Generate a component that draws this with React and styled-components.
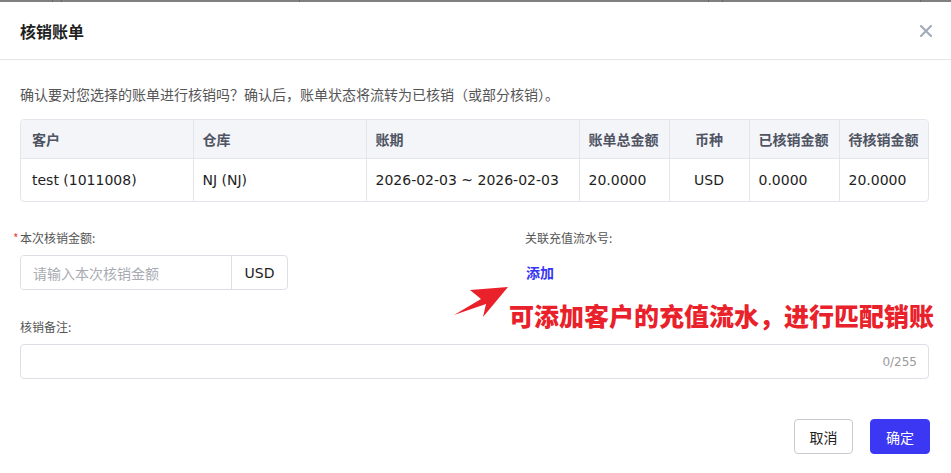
import React from "react";
import styled, { createGlobalStyle } from "styled-components";

const GlobalStyle = createGlobalStyle`
  html, body {
    margin: 0;
    padding: 0;
    background: #ffffff;
  }
  body {
    font-family: "DejaVu Sans", "Noto Sans CJK SC", sans-serif;
    color: #222;
  }
  * { box-sizing: border-box; }
`;

const Backdrop = styled.div`
  height: 2px;
  background:
    linear-gradient(90deg,
      transparent 52px, #666 52px, #666 53px, transparent 53px,
      transparent 61px, #666 61px, #666 62px, transparent 62px,
      transparent 299px, #666 299px, #666 300px, transparent 300px,
      transparent 708px, #666 708px, #666 709px, transparent 709px,
      transparent 722px, #666 722px, #666 723px, transparent 723px,
      transparent 920px, #666 920px, #666 921px, transparent 921px),
    #808080;
`;

const Modal = styled.div`
  background: #fff;
  display: flex;
  flex-direction: column;
  position: relative;
`;

const Header = styled.div`
  height: 58px;
  display: flex;
  align-items: center;
  justify-content: space-between;
  padding: 0 20px;
  border-bottom: 1px solid #e6e6e6;
`;

const Title = styled.h2`
  margin: 0;
  font-family: "Noto Sans CJK SC", sans-serif;
  font-size: 16px;
  font-weight: 700;
  color: #1f1f1f;
`;

const CloseButton = styled.button`
  border: 0;
  background: none;
  padding: 0;
  width: 14px;
  height: 14px;
  display: flex;
  align-items: center;
  justify-content: center;
  cursor: pointer;
  margin-right: -2px;
`;

const Body = styled.div`
  padding: 23px 22px 0 20px;
  display: flex;
  flex-direction: column;
`;

const Notice = styled.p`
  margin: 0;
  font-family: "Noto Sans CJK SC", sans-serif;
  font-size: 14px;
  line-height: 22px;
  color: #555;
`;

const TableWrap = styled.div`
  margin-top: 14px;
  border: 1px solid #e3e5eb;
  border-radius: 4px;
  overflow: hidden;
`;

const Table = styled.table`
  width: 100%;
  border-collapse: collapse;
  table-layout: fixed;
  font-size: 14px;
`;

const Th = styled.th`
  height: 38px;
  padding: 0 ${(p) => (p.$first ? "11px" : "9px")};
  background: #f4f5f9;
  color: #4f5462;
  font-family: "Noto Sans CJK SC", sans-serif;
  font-weight: 600;
  font-size: 14px;
  text-align: ${(p) => (p.$center ? "center" : "left")};
  border-right: ${(p) => (p.$last ? "0" : "1px solid #e3e5eb")};
  border-bottom: 1px solid #e3e5eb;
`;

const Td = styled.td`
  height: 43px;
  padding: 0 ${(p) => (p.$first ? "11px" : "9px")};
  color: #1e1e1e;
  text-align: ${(p) => (p.$center ? "center" : "left")};
  border-right: ${(p) => (p.$last ? "0" : "1px solid #e3e5eb")};
  white-space: nowrap;
`;

const FormGrid = styled.div`
  margin-top: 26px;
  display: grid;
  grid-template-columns: 505px 1fr;
  row-gap: 27px;
`;

const Field = styled.div`
  display: flex;
  flex-direction: column;
  gap: 7px;
  grid-column: ${(p) => (p.$wide ? "1 / -1" : "auto")};
`;

const Label = styled.label`
  position: relative;
  font-family: "Noto Sans CJK SC", sans-serif;
  font-size: 12px;
  line-height: 20px;
  color: #555;
`;

const Required = styled.span`
  position: absolute;
  left: -7px;
  top: 0;
  color: #e5484d;
`;

const InputGroup = styled.div`
  width: 268px;
  height: 35px;
  display: flex;
  border: 1px solid #dcdfe6;
  border-radius: 4px;
  overflow: hidden;
`;

const TextInput = styled.input`
  flex: 1;
  min-width: 0;
  border: 0;
  outline: none;
  padding: 0 12px;
  font-family: "Noto Sans CJK SC", sans-serif;
  font-size: 14px;
  color: #222;
  &::placeholder { color: #a8abb2; }
`;

const Addon = styled.span`
  width: 56px;
  display: flex;
  align-items: center;
  justify-content: center;
  border-left: 1px solid #dcdfe6;
  font-size: 14px;
  color: #1e1e1e;
`;

const AddLink = styled.a`
  margin-top: 7px;
  font-family: "Noto Sans CJK SC", sans-serif;
  font-size: 14px;
  font-weight: 700;
  line-height: 20px;
  color: #3636f2;
  cursor: pointer;
  padding-left: 1px;
`;

const TextAreaBox = styled.div`
  height: 35px;
  border: 1px solid #dcdfe6;
  border-radius: 4px;
  display: flex;
  align-items: center;
  padding: 0 11px;
`;

const TextField = styled.input`
  flex: 1;
  border: 0;
  outline: none;
  font-size: 14px;
  background: transparent;
`;

const Counter = styled.span`
  font-size: 12px;
  color: #9a9a9a;
`;

const Footer = styled.div`
  display: flex;
  justify-content: flex-end;
  gap: 17px;
  padding: 40px 21px 0 20px;
`;

const Button = styled.button`
  height: 35px;
  width: ${(p) => (p.$primary ? "60px" : "59px")};
  padding: 0;
  border-radius: 4px;
  border: 1px solid ${(p) => (p.$primary ? "#3b37f3" : "#c8cad0")};
  background: ${(p) => (p.$primary ? "#3b37f3" : "#fff")};
  color: ${(p) => (p.$primary ? "#fff" : "#222")};
  font-family: "Noto Sans CJK SC", sans-serif;
  font-size: 14px;
  cursor: pointer;
`;

const Callout = styled.div`
  position: absolute;
  left: 454px;
  top: 283px;
  display: flex;
  align-items: flex-end;
  pointer-events: none;
`;

const CalloutText = styled.span`
  margin-left: -1px;
  margin-bottom: -12px;
  font-family: "Noto Sans CJK SC", sans-serif;
  font-size: 25px;
  font-weight: 900;
  line-height: 30px;
  color: #e9212b;
  white-space: nowrap;
`;

const columns = [
  { key: "customer", title: "客户", width: 172 },
  { key: "warehouse", title: "仓库", width: 173 },
  { key: "period", title: "账期", width: 213 },
  { key: "total", title: "账单总金额", width: 90 },
  { key: "currency", title: "币种", width: 80, center: true },
  { key: "settled", title: "已核销金额", width: 90 },
  { key: "pending", title: "待核销金额" },
];

const row = {
  customer: "test (1011008)",
  warehouse: "NJ (NJ)",
  period: "2026-02-03 ~ 2026-02-03",
  total: "20.0000",
  currency: "USD",
  settled: "0.0000",
  pending: "20.0000",
};

function CloseIcon() {
  return (
    <svg width="12" height="12" viewBox="0 0 12 12">
      <path d="M1 1 L11 11 M11 1 L1 11" stroke="#a4acbb" strokeWidth="2.2" strokeLinecap="round" />
    </svg>
  );
}

function ArrowMark() {
  return (
    <svg width="56" height="33" viewBox="0 0 56 33">
      <polygon points="0,30 27,14 16,5 54,2 29,32 32,19" fill="#e9212b" />
    </svg>
  );
}

export default function App() {
  return (
    <>
      <GlobalStyle />
      <Backdrop />
      <Modal>
        <Header>
          <Title>核销账单</Title>
          <CloseButton aria-label="关闭">
            <CloseIcon />
          </CloseButton>
        </Header>
        <Body>
          <Notice>确认要对您选择的账单进行核销吗？确认后，账单状态将流转为已核销（或部分核销）。</Notice>
          <TableWrap>
            <Table>
              <colgroup>
                {columns.map((c) => (
                  <col key={c.key} style={c.width ? { width: c.width } : undefined} />
                ))}
              </colgroup>
              <thead>
                <tr>
                  {columns.map((c, i) => (
                    <Th key={c.key} $first={i === 0} $last={i === columns.length - 1} $center={c.center}>
                      {c.title}
                    </Th>
                  ))}
                </tr>
              </thead>
              <tbody>
                <tr>
                  {columns.map((c, i) => (
                    <Td key={c.key} $first={i === 0} $last={i === columns.length - 1} $center={c.center}>
                      {row[c.key]}
                    </Td>
                  ))}
                </tr>
              </tbody>
            </Table>
          </TableWrap>

          <FormGrid>
            <Field>
              <Label>
                <Required>*</Required>本次核销金额:
              </Label>
              <InputGroup>
                <TextInput placeholder="请输入本次核销金额" />
                <Addon>USD</Addon>
              </InputGroup>
            </Field>
            <Field>
              <Label>关联充值流水号:</Label>
              <AddLink>添加</AddLink>
            </Field>
            <Field $wide>
              <Label>核销备注:</Label>
              <TextAreaBox>
                <TextField />
                <Counter>0/255</Counter>
              </TextAreaBox>
            </Field>
          </FormGrid>
        </Body>
        <Footer>
          <Button>取消</Button>
          <Button $primary>确定</Button>
        </Footer>

        <Callout>
          <ArrowMark />
          <CalloutText>可添加客户的充值流水，进行匹配销账</CalloutText>
        </Callout>
      </Modal>
    </>
  );
}
